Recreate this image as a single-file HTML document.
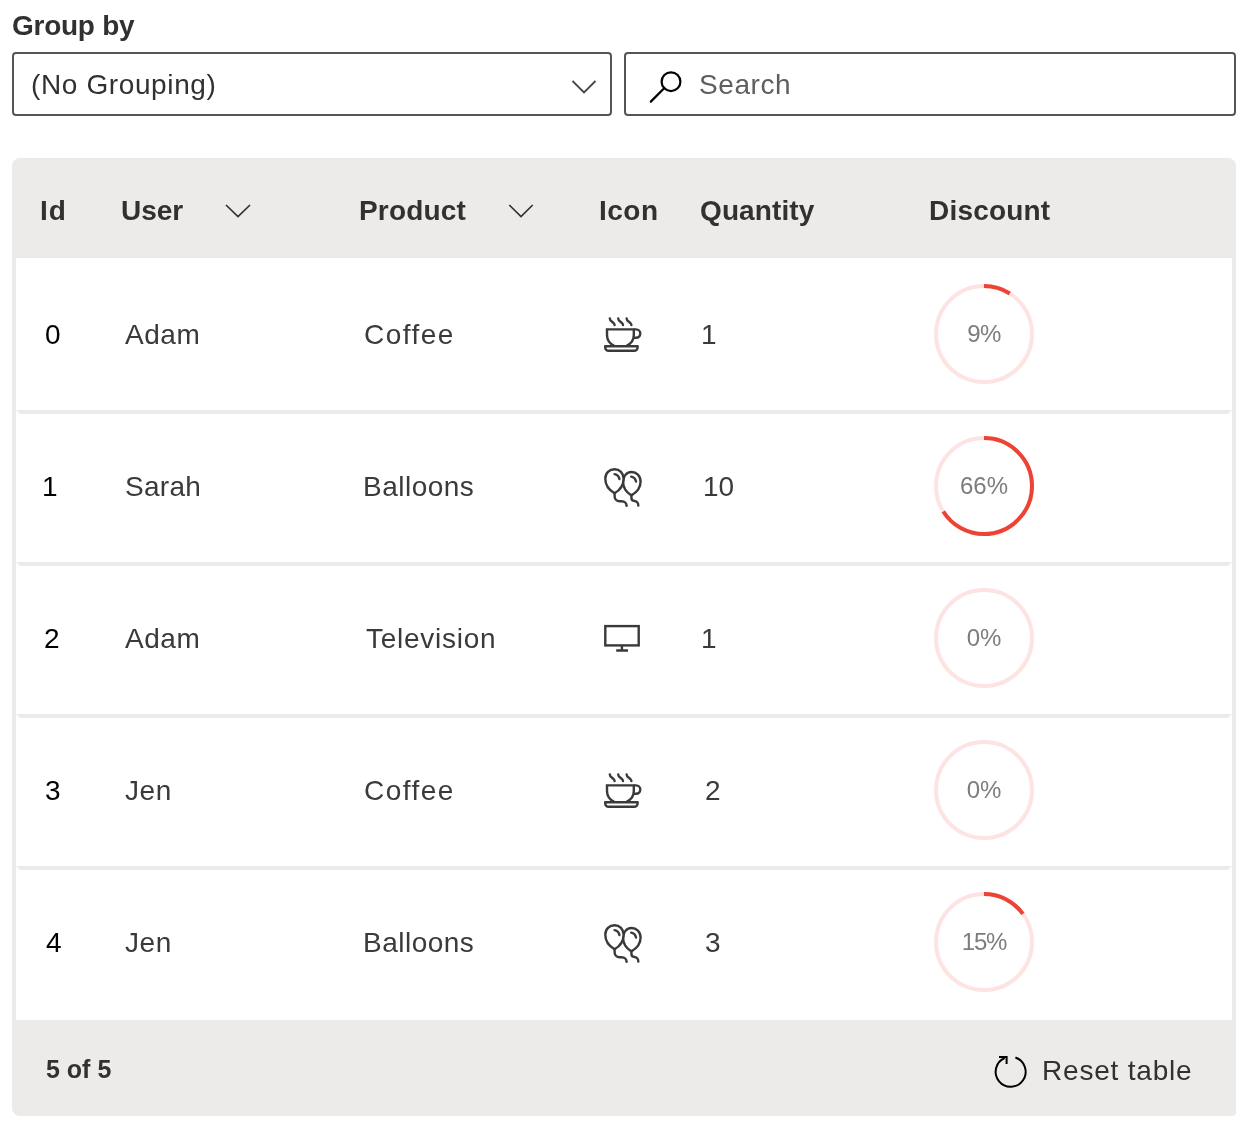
<!DOCTYPE html>
<html><head><meta charset="utf-8">
<style>
*{margin:0;padding:0;box-sizing:border-box}
html,body{width:1244px;height:1124px;background:#fff;overflow:hidden}
body{position:relative;font-family:"Liberation Sans",sans-serif;color:#323130}
.a{position:absolute;white-space:nowrap;font-size:28px;line-height:40px;will-change:transform}
.b{font-weight:bold}
.s{position:absolute}
.box{position:absolute;top:52px;height:64px;border:2px solid #575553;border-radius:4px;background:#fff}
.tbl{position:absolute;left:12px;top:158px;width:1224px;height:958px;background:#edebe9;border-radius:8px 8px 4px 8px}
.rows{position:absolute;left:16px;top:258px;width:1216px;height:762px;background:#fff}
.sep{position:absolute;left:16px;width:1216px;height:4px;background:#edebe9;clip-path:polygon(0 0,100% 0,calc(100% - 4px) 100%,4px 100%)}
.blk{color:#000}
.g{color:#3b3a39}
.f25{font-size:25px}
.pct{font-size:24px;color:#7d7d7d;text-align:center;width:100px}
</style></head><body>
<div class="a b" style="left:12.3px;top:6.2px;letter-spacing:-0.26px">Group by</div>
<div class="box" style="left:12px;width:600px"></div>
<div class="a " style="left:31.2px;top:65px;letter-spacing:0.62px">(No Grouping)</div>
<svg class="a" style="left:560px;top:70px" width="48" height="32" viewBox="560 70 48 32"><path d="M572.5,81 L584,92.5 L595.5,81" fill="none" stroke="#484644" stroke-width="1.8"/></svg>
<div class="box" style="left:624px;width:612px"></div>
<svg class="a" style="left:640px;top:60px" width="50" height="50" viewBox="640 60 50 50"><circle cx="671" cy="81.7" r="9.4" fill="none" stroke="#000" stroke-width="2.2"/><path d="M650.8,101.6 L664.4,88" stroke="#000" stroke-width="2.2" stroke-linecap="round"/></svg>
<div class="a " style="left:698.5px;top:65px;letter-spacing:0.58px"><span style="color:#605e5c">Search</span></div>
<div class="tbl"></div>
<div class="a b" style="left:39.7px;top:191px;letter-spacing:1px">Id</div>
<div class="a b" style="left:120.5px;top:191px;letter-spacing:0px">User</div>
<svg class="a" style="left:220px;top:198px" width="36" height="24" viewBox="220 198 36 24"><path d="M226,205 L238,216.5 L250,205" fill="none" stroke="#323130" stroke-width="1.7"/></svg>
<div class="a b" style="left:358.9px;top:191px;letter-spacing:0.18px">Product</div>
<svg class="a" style="left:503px;top:198px" width="36" height="24" viewBox="503 198 36 24"><path d="M509.3,205 L521,216.5 L532.7,205" fill="none" stroke="#323130" stroke-width="1.7"/></svg>
<div class="a b" style="left:598.9px;top:191px;letter-spacing:0.5px">Icon</div>
<div class="a b" style="left:700.4px;top:191px;letter-spacing:0.1px">Quantity</div>
<div class="a b" style="left:928.9px;top:191px;letter-spacing:0.2px">Discount</div>
<div class="rows"></div>
<div class="a blk" style="left:44.75px;top:315px;letter-spacing:0px">0</div>
<div class="a g" style="left:124.9px;top:315px;letter-spacing:0.53px">Adam</div>
<div class="a g" style="left:363.8px;top:315px;letter-spacing:1.48px">Coffee</div>
<svg class="a" style="left:580px;top:290px" width="100" height="80" viewBox="0 0 100 80"><g fill="none" stroke="#3b3a39" stroke-width="2.4" stroke-linecap="round" stroke-linejoin="round">
<path d="M29.8,28.4 c0,2.6 2.4,3.4 3.6,4.4 c0.9,0.8 1.2,1.4 1.2,2.2"/>
<path d="M38.2,28.4 c0,2.6 2.4,3.4 3.6,4.4 c0.9,0.8 1.2,1.4 1.2,2.2"/>
<path d="M46.6,28.4 c0,2.6 2.4,3.4 3.6,4.4 c0.9,0.8 1.2,1.4 1.2,2.2"/>
<path d="M34.3,55.8 C30.3,54 27,50 27,45 V39.4 H53.8 V45 C53.8,50 50.5,54 46.5,55.8" stroke-linecap="butt" stroke-linejoin="miter"/>
<path d="M53.8,39.4 H56.1 a4.2,4.2 0 0 1 0,8.4 H53.4" stroke-linecap="butt"/>
<path d="M25.2,56.2 H57.6 V57.4 a3.4,3.4 0 0 1 -3.4,3.4 H28.6 a3.4,3.4 0 0 1 -3.4,-3.4 Z" stroke-linecap="butt"/>
</g></svg>
<div class="a g" style="left:701.25px;top:315px;letter-spacing:0px">1</div>
<svg class="s" style="left:932px;top:282px" width="104" height="104" viewBox="932 282 104 104"><circle cx="984" cy="334" r="48" fill="none" stroke="#fde3e1" stroke-width="4"/><circle cx="984" cy="334" r="48" fill="none" stroke="#ee4234" stroke-width="4" stroke-dasharray="27.143 301.593" transform="rotate(-90 984 334)"/></svg><div class="a pct" style="left:934.3px;top:314.3px;letter-spacing:-0.6px">9%</div>
<div class="sep" style="top:410px"></div>
<div class="a blk" style="left:41.6px;top:467px;letter-spacing:0px">1</div>
<div class="a g" style="left:124.7px;top:467px;letter-spacing:0.27px">Sarah</div>
<div class="a g" style="left:363.4px;top:467px;letter-spacing:0.49px">Balloons</div>
<svg class="a" style="left:580px;top:446px" width="100" height="80" viewBox="0 0 100 80"><g fill="none" stroke="#3b3a39" stroke-width="2.4" stroke-linecap="round" stroke-linejoin="round">
<path d="M51.4,49.4 C46.5,46.5 43,42 43,35.6 C43,30 46.8,26 51.6,26 C56.4,26 60.6,30 60.6,35.6 C60.6,42 56.5,46.5 51.4,49.4 Z"/>
<path d="M34.5,47.3 C29.4,44.4 25.3,39 25.3,32.6 C25.3,27.2 29.4,23.3 34.5,23.3 C39.6,23.3 43.6,27.2 43.6,32.6 C43.6,39 39.8,44.4 34.5,47.3 Z" fill="#fff"/>
<path d="M34.6,28.1 C37,28.6 39,30.6 39.4,33"/>
<path d="M51.2,30.6 C53.6,31.1 55.6,33.1 56,35.5"/>
<path d="M34.6,47.6 V50 C34.6,53 36.6,55.2 39.6,55.2 H41.6 C44.6,55.2 46.6,57.4 46.6,59.8"/>
<path d="M51.4,49.6 V51.6 C51.4,53.6 52.6,55 54.4,55 C56.6,55 58.3,57 58.3,59.6"/>
</g></svg>
<div class="a g" style="left:702.7px;top:467px;letter-spacing:0px">10</div>
<svg class="s" style="left:932px;top:434px" width="104" height="104" viewBox="932 434 104 104"><circle cx="984" cy="486" r="48" fill="none" stroke="#fde3e1" stroke-width="4"/><circle cx="984" cy="486" r="48" fill="none" stroke="#ee4234" stroke-width="4" stroke-dasharray="199.051 301.593" transform="rotate(-90 984 486)"/></svg><div class="a pct" style="left:934.0px;top:466.3px;letter-spacing:0px">66%</div>
<div class="sep" style="top:562px"></div>
<div class="a blk" style="left:44.3px;top:619px;letter-spacing:0px">2</div>
<div class="a g" style="left:124.9px;top:619px;letter-spacing:0.53px">Adam</div>
<div class="a g" style="left:365.6px;top:619px;letter-spacing:0.73px">Television</div>
<svg class="a" style="left:580px;top:598px" width="100" height="80" viewBox="0 0 100 80"><g fill="none" stroke="#3b3a39" stroke-width="2.4">
<rect x="25.3" y="28.1" width="33.4" height="19.3"/>
<path d="M41.9,47.4 V52.5 M36.2,52.5 H48"/>
</g></svg>
<div class="a g" style="left:701.25px;top:619px;letter-spacing:0px">1</div>
<svg class="s" style="left:932px;top:586px" width="104" height="104" viewBox="932 586 104 104"><circle cx="984" cy="638" r="48" fill="none" stroke="#fde3e1" stroke-width="4"/></svg><div class="a pct" style="left:934.0px;top:618.3px;letter-spacing:0px">0%</div>
<div class="sep" style="top:714px"></div>
<div class="a blk" style="left:45px;top:771px;letter-spacing:0px">3</div>
<div class="a g" style="left:125.2px;top:771px;letter-spacing:0.6px">Jen</div>
<div class="a g" style="left:363.8px;top:771px;letter-spacing:1.48px">Coffee</div>
<svg class="a" style="left:580px;top:746px" width="100" height="80" viewBox="0 0 100 80"><g fill="none" stroke="#3b3a39" stroke-width="2.4" stroke-linecap="round" stroke-linejoin="round">
<path d="M29.8,28.4 c0,2.6 2.4,3.4 3.6,4.4 c0.9,0.8 1.2,1.4 1.2,2.2"/>
<path d="M38.2,28.4 c0,2.6 2.4,3.4 3.6,4.4 c0.9,0.8 1.2,1.4 1.2,2.2"/>
<path d="M46.6,28.4 c0,2.6 2.4,3.4 3.6,4.4 c0.9,0.8 1.2,1.4 1.2,2.2"/>
<path d="M34.3,55.8 C30.3,54 27,50 27,45 V39.4 H53.8 V45 C53.8,50 50.5,54 46.5,55.8" stroke-linecap="butt" stroke-linejoin="miter"/>
<path d="M53.8,39.4 H56.1 a4.2,4.2 0 0 1 0,8.4 H53.4" stroke-linecap="butt"/>
<path d="M25.2,56.2 H57.6 V57.4 a3.4,3.4 0 0 1 -3.4,3.4 H28.6 a3.4,3.4 0 0 1 -3.4,-3.4 Z" stroke-linecap="butt"/>
</g></svg>
<div class="a g" style="left:704.5px;top:771px;letter-spacing:0px">2</div>
<svg class="s" style="left:932px;top:738px" width="104" height="104" viewBox="932 738 104 104"><circle cx="984" cy="790" r="48" fill="none" stroke="#fde3e1" stroke-width="4"/></svg><div class="a pct" style="left:934.0px;top:770.3px;letter-spacing:0px">0%</div>
<div class="sep" style="top:866px"></div>
<div class="a blk" style="left:45.5px;top:923px;letter-spacing:0px">4</div>
<div class="a g" style="left:125.2px;top:923px;letter-spacing:0.6px">Jen</div>
<div class="a g" style="left:363.4px;top:923px;letter-spacing:0.49px">Balloons</div>
<svg class="a" style="left:580px;top:902px" width="100" height="80" viewBox="0 0 100 80"><g fill="none" stroke="#3b3a39" stroke-width="2.4" stroke-linecap="round" stroke-linejoin="round">
<path d="M51.4,49.4 C46.5,46.5 43,42 43,35.6 C43,30 46.8,26 51.6,26 C56.4,26 60.6,30 60.6,35.6 C60.6,42 56.5,46.5 51.4,49.4 Z"/>
<path d="M34.5,47.3 C29.4,44.4 25.3,39 25.3,32.6 C25.3,27.2 29.4,23.3 34.5,23.3 C39.6,23.3 43.6,27.2 43.6,32.6 C43.6,39 39.8,44.4 34.5,47.3 Z" fill="#fff"/>
<path d="M34.6,28.1 C37,28.6 39,30.6 39.4,33"/>
<path d="M51.2,30.6 C53.6,31.1 55.6,33.1 56,35.5"/>
<path d="M34.6,47.6 V50 C34.6,53 36.6,55.2 39.6,55.2 H41.6 C44.6,55.2 46.6,57.4 46.6,59.8"/>
<path d="M51.4,49.6 V51.6 C51.4,53.6 52.6,55 54.4,55 C56.6,55 58.3,57 58.3,59.6"/>
</g></svg>
<div class="a g" style="left:705px;top:923px;letter-spacing:0px">3</div>
<svg class="s" style="left:932px;top:890px" width="104" height="104" viewBox="932 890 104 104"><circle cx="984" cy="942" r="48" fill="none" stroke="#fde3e1" stroke-width="4"/><circle cx="984" cy="942" r="48" fill="none" stroke="#ee4234" stroke-width="4" stroke-dasharray="45.239 301.593" transform="rotate(-90 984 942)"/></svg><div class="a pct" style="left:933.6px;top:922.3px;letter-spacing:-1.2px">15%</div>
<div class="a b f25" style="left:46.3px;top:1048.7px;letter-spacing:0px">5 of 5</div>
<svg class="a" style="left:990px;top:1050px" width="44" height="44" viewBox="990 1050 44 44"><g fill="none" stroke="#000" stroke-width="2">
<path d="M1004.6,1058 A15,15 0 1 0 1015.4,1057.5"/>
<path d="M999,1057 H1006.6 V1064"/>
</g></svg>
<div class="a " style="left:1042px;top:1050.5px;letter-spacing:0.8px">Reset table</div>
</body></html>
